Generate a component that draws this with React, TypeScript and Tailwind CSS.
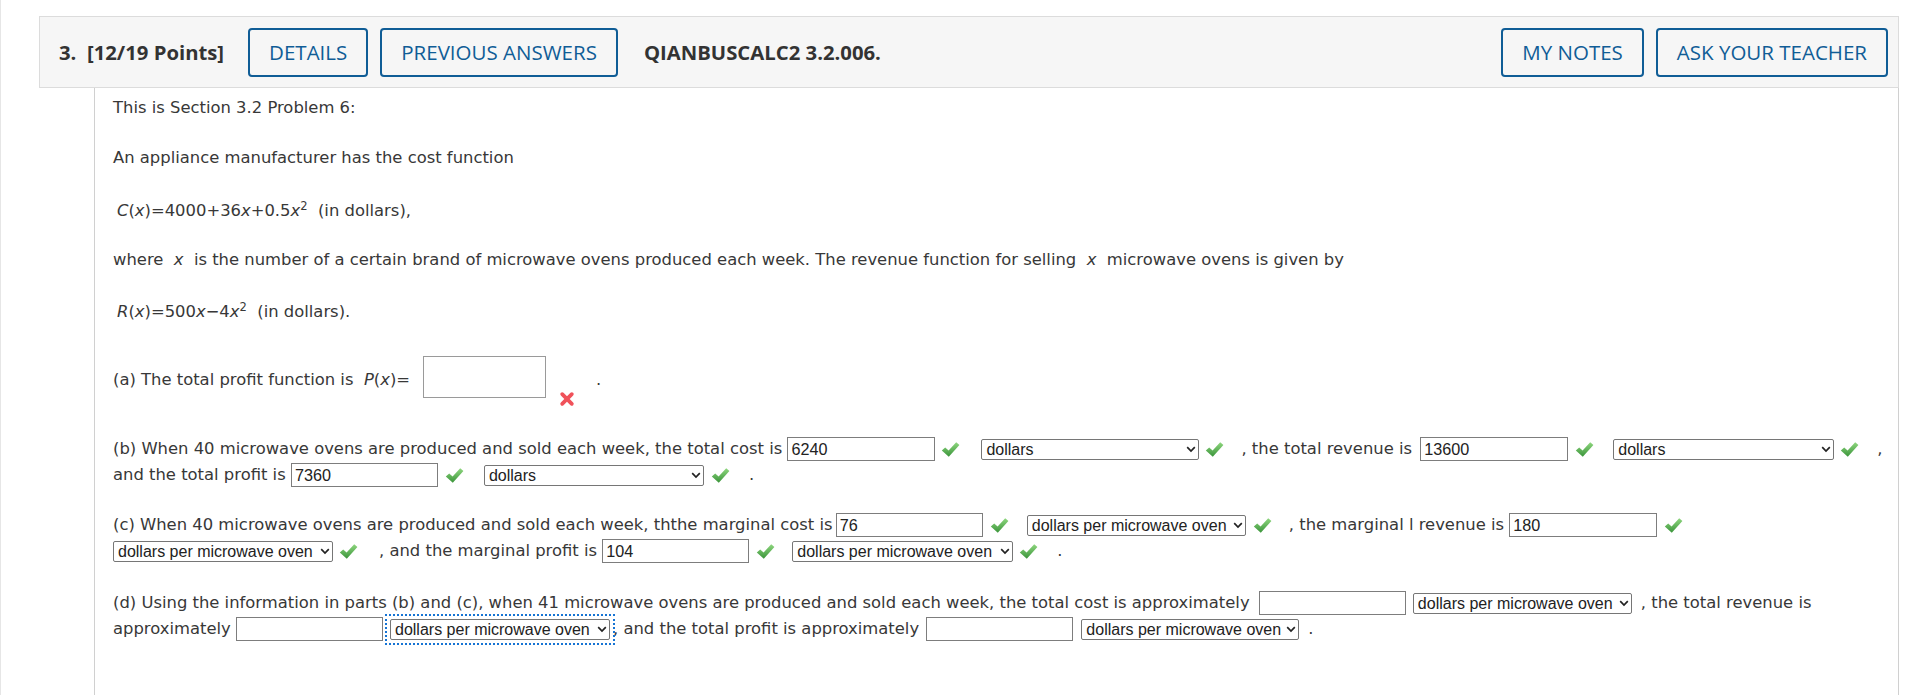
import React from "react";

const bodyFont = "font-['DejaVu_Sans',Verdana,sans-serif]";

function Check({ ml = "" }: { ml?: string }) {
  return (
    <svg width="19" height="17" viewBox="0 0 19 17" className={`shrink-0 ${ml}`}>
      <defs>
        <linearGradient id="chkg" x1="0" y1="0" x2="0" y2="1">
          <stop offset="0" stopColor="#8fd77f" />
          <stop offset="1" stopColor="#3a943a" />
        </linearGradient>
      </defs>
      <path d="M0.8 9.4 L4.2 6.4 L7.6 9.6 L15.2 1.2 L18.4 4 L7.8 15.8 Z" fill="url(#chkg)" />
    </svg>
  );
}

function Cross() {
  return (
    <svg width="16" height="16" viewBox="0 0 16 16" className="shrink-0">
      <path d="M3.2 3.2 L12.8 12.8 M12.8 3.2 L3.2 12.8" stroke="#f0525a" strokeWidth="3.8" strokeLinecap="round" />
    </svg>
  );
}

function Inp({ v = "", w, ml = "" }: { v?: string; w: string; ml?: string }) {
  return (
    <input
      readOnly
      value={v}
      className={`h-[24px] shrink-0 border border-[#7d7d7d] bg-white px-[3px] text-[16.2px] text-[#222] font-['Liberation_Sans',Arial,sans-serif] outline-none ${w} ${ml}`}
    />
  );
}

function Sel({ label, w, ml = "", focus = false }: { label: string; w: string; ml?: string; focus?: boolean }) {
  return (
    <span
      className={`relative inline-flex shrink-0 ${ml} ${
        focus ? "outline-2 outline-dotted outline-[#1674d4] outline-offset-[3px]" : ""
      }`}
    >
      <select
        defaultValue={label}
        className={`appearance-none h-[21px] border border-[#767676] rounded-[2px] bg-white pl-[4px] pr-[14px] text-[16px] leading-[19px] text-[#222] font-['Liberation_Sans',Arial,sans-serif] outline-none ${w}`}
      >
        <option>{label}</option>
      </select>
      <svg
        className="pointer-events-none absolute right-[3px] top-[7px]"
        width="10"
        height="7"
        viewBox="0 0 10 7"
      >
        <path d="M1.2 1.2 L5 5 L8.8 1.2" stroke="#222" strokeWidth="1.7" fill="none" />
      </svg>
    </span>
  );
}

function T({ children, ml = "" }: { children: React.ReactNode; ml?: string }) {
  return <span className={`whitespace-pre ${ml}`}>{children}</span>;
}

function Row({ children }: { children: React.ReactNode }) {
  return <div className="flex h-[26px] items-center whitespace-pre">{children}</div>;
}

function HBtn({ children }: { children: React.ReactNode }) {
  return (
    <button className="h-[49px] shrink-0 rounded-[4px] border-2 border-[#105d96] px-[19px] text-[20.5px] font-medium leading-none text-[#105d96]">
      {children}
    </button>
  );
}

export default function App() {
  return (
    <div className="min-h-[695px] border-l border-[#e6e6e6] bg-white pl-[38px] pr-[21px] pt-[16px]">
      <div className="flex h-[72px] items-center border border-[#dcdcdc] bg-[#f6f6f6] pl-[19px] pr-[10px] font-['Open_Sans',sans-serif]">
        <span className="whitespace-pre text-[20.3px] font-bold text-[#333]">3.  [12/19 Points]</span>
        <div className="ml-[24px] flex gap-[12px]">
          <HBtn>DETAILS</HBtn>
          <HBtn>PREVIOUS ANSWERS</HBtn>
        </div>
        <span className="ml-[26px] text-[20.3px] font-bold text-[#333]">QIANBUSCALC2 3.2.006.</span>
        <div className="ml-auto flex gap-[12px]">
          <HBtn>MY NOTES</HBtn>
          <HBtn>ASK YOUR TEACHER</HBtn>
        </div>
      </div>

      <div
        className={`ml-[55px] min-h-[607px] border-l border-r border-[#d0d0d0] pl-[18px] pt-[7px] text-[16.4px] text-[#383838] ${bodyFont}`}
      >
        <p className="leading-[26px]">This is Section 3.2 Problem 6:</p>
        <p className="mt-[24px] leading-[26px]">An appliance manufacturer has the cost function</p>
        <p className="mt-[27px] whitespace-pre pl-[4px] leading-[26px]">
          <i>C</i>(<i>x</i>)=4000+36<i>x</i>+0.5<i>x</i>
          <sup className="text-[11.5px]">2</sup>
          {"  (in dollars),"}
        </p>
        <p className="mt-[23px] whitespace-pre leading-[26px]">
          {"where  "}
          <i>x</i>
          {"  is the number of a certain brand of microwave ovens produced each week. The revenue function for selling  "}
          <i>x</i>
          {"  microwave ovens is given by"}
        </p>
        <p className="mt-[26px] whitespace-pre pl-[4px] leading-[26px]">
          <i>R</i>(<i>x</i>)=500<i>x</i>−4<i>x</i>
          <sup className="text-[11.5px]">2</sup>
          {"  (in dollars)."}
        </p>

        <div className="mt-[31px] flex items-start">
          <span className="mt-[11px] whitespace-pre leading-[26px]">
            {"(a) The total profit function is  "}
            <i>P</i>(<i>x</i>)=
          </span>
          <input
            readOnly
            value=""
            className="ml-[13px] h-[42px] w-[123px] shrink-0 border border-[#9a9a9a] bg-white outline-none"
          />
          <span className="ml-[13px] mt-[35px] flex">
            <Cross />
          </span>
          <span className="ml-[21px] mt-[11px] leading-[26px]">.</span>
        </div>

        <div className="mt-[29px]">
          <Row>
            <T>(b) When 40 microwave ovens are produced and sold each week, the total cost is </T>
            <Inp v="6240" w="w-[148px]" />
            <Check ml="ml-[6px]" />
            <Sel label="dollars" w="w-[218px]" ml="ml-[21px]" />
            <Check ml="ml-[6px]" />
            <T ml="ml-[17px]">, the total revenue is </T>
            <Inp v="13600" w="w-[148px]" ml="ml-[3px]" />
            <Check ml="ml-[7px]" />
            <Sel label="dollars" w="w-[221px]" ml="ml-[19px]" />
            <Check ml="ml-[6px]" />
            <T ml="ml-[18px]">,</T>
          </Row>
          <Row>
            <T>and the total profit is </T>
            <Inp v="7360" w="w-[147px]" />
            <Check ml="ml-[7px]" />
            <Sel label="dollars" w="w-[220px]" ml="ml-[20px]" />
            <Check ml="ml-[7px]" />
            <T ml="ml-[19px]">.</T>
          </Row>
        </div>

        <div className="mt-[24px]">
          <Row>
            <T>(c) When 40 microwave ovens are produced and sold each week, ththe marginal cost is </T>
            <Inp v="76" w="w-[147px]" ml="ml-[-2px]" />
            <Check ml="ml-[7px]" />
            <Sel label="dollars per microwave oven" w="w-[219px]" ml="ml-[18px]" />
            <Check ml="ml-[7px]" />
            <T ml="ml-[17px]">, the marginal l revenue is </T>
            <Inp v="180" w="w-[148px]" />
            <Check ml="ml-[7px]" />
          </Row>
          <Row>
            <Sel label="dollars per microwave oven" w="w-[220px]" />
            <Check ml="ml-[6px]" />
            <T ml="ml-[21px]">, and the marginal profit is </T>
            <Inp v="104" w="w-[147px]" />
            <Check ml="ml-[7px]" />
            <Sel label="dollars per microwave oven" w="w-[221px]" ml="ml-[17px]" />
            <Check ml="ml-[6px]" />
            <T ml="ml-[19px]">.</T>
          </Row>
        </div>

        <div className="mt-[26px]">
          <Row>
            <T>
              (d) Using the information in parts (b) and (c), when 41 microwave ovens are produced and sold each week, the total cost is approximately{" "}
            </T>
            <Inp w="w-[147px]" ml="ml-[4px]" />
            <Sel label="dollars per microwave oven" w="w-[219px]" ml="ml-[7px]" />
            <T ml="ml-[9px]">, the total revenue is</T>
          </Row>
          <Row>
            <T>approximately </T>
            <Inp w="w-[147px]" />
            <Sel label="dollars per microwave oven" w="w-[220px]" ml="ml-[7px]" focus />
            <T ml="ml-[3px]">, and the total profit is approximately </T>
            <Inp w="w-[147px]" ml="ml-[2px]" />
            <Sel label="dollars per microwave oven" w="w-[218px]" ml="ml-[8px]" />
            <T ml="ml-[9px]">.</T>
          </Row>
        </div>
      </div>
    </div>
  );
}
